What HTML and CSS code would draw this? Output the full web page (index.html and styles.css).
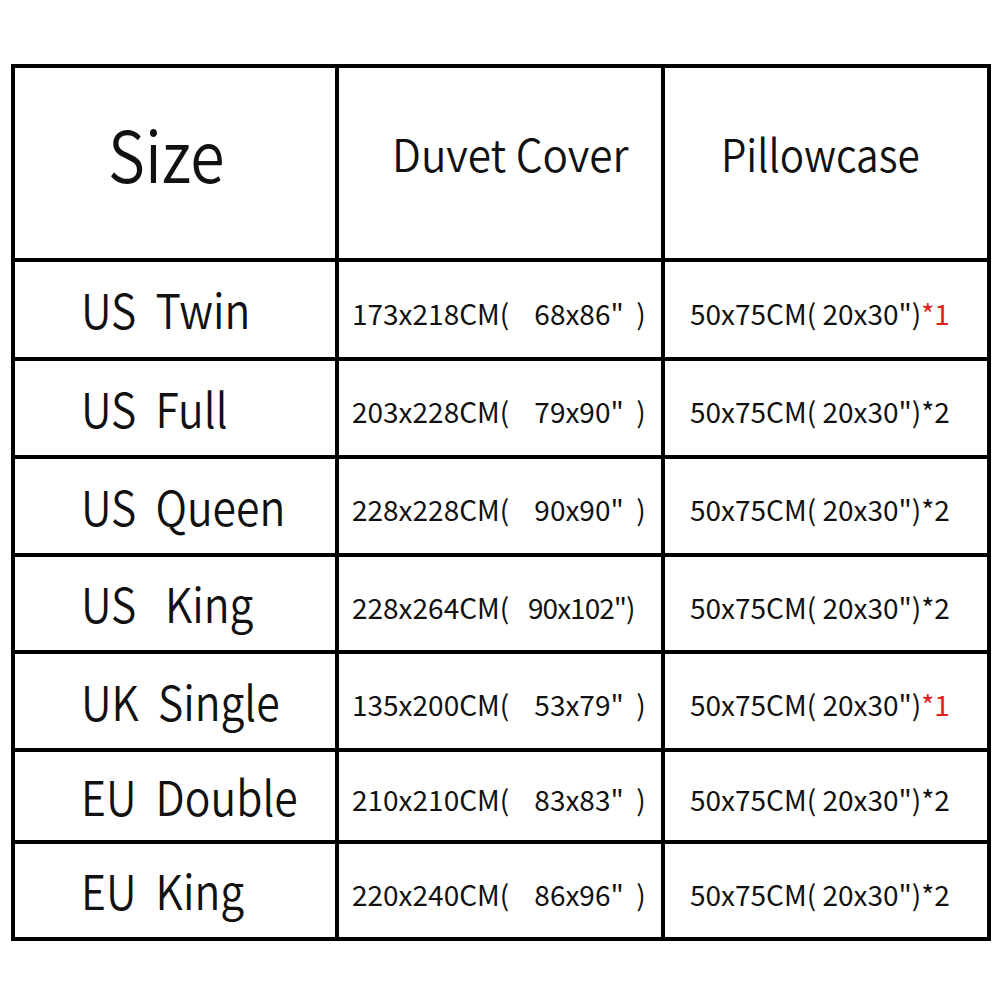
FILE: index.html
```html
<!DOCTYPE html>
<html>
<head>
<meta charset="utf-8">
<link rel="stylesheet" href="styles.css">
</head>
<body>
<div class="table">
  <div class="cell head c1"><span class="size">Size</span></div>
  <div class="cell head c2"><span class="hd duvet">Duvet Cover</span></div>
  <div class="cell head c3"><span class="hd pillow">Pillowcase</span></div>

  <div class="cell label"><span class="lt">US  Twin</span></div>
  <div class="cell d2">173x218CM(    68x86"  )</div>
  <div class="cell d3">50x75CM( 20x30")<span class="red">*1</span></div>

  <div class="cell label"><span class="lt">US  Full</span></div>
  <div class="cell d2">203x228CM(    79x90"  )</div>
  <div class="cell d3">50x75CM( 20x30")*2</div>

  <div class="cell label"><span class="lt">US  Queen</span></div>
  <div class="cell d2">228x228CM(    90x90"  )</div>
  <div class="cell d3">50x75CM( 20x30")*2</div>

  <div class="cell label"><span class="lt">US   King</span></div>
  <div class="cell d2">228x264CM(   <span class="tight">90x102")</span></div>
  <div class="cell d3">50x75CM( 20x30")*2</div>

  <div class="cell label"><span class="lt">UK  Single</span></div>
  <div class="cell d2">135x200CM(    53x79"  )</div>
  <div class="cell d3">50x75CM( 20x30")<span class="red">*1</span></div>

  <div class="cell label"><span class="lt">EU  Double</span></div>
  <div class="cell d2">210x210CM(    83x83"  )</div>
  <div class="cell d3">50x75CM( 20x30")*2</div>

  <div class="cell label"><span class="lt">EU  King</span></div>
  <div class="cell d2">220x240CM(    86x96"  )</div>
  <div class="cell d3">50x75CM( 20x30")*2</div>
</div>
</body>
</html>
```
FILE: styles.css
```css
html, body {
  margin: 0;
  padding: 0;
  background: #ffffff;
}
body {
  font-family: "Noto Sans CJK SC", "Noto Sans", sans-serif;
  font-weight: 350;
  color: #111111;
}
.table {
  margin: 64px 0 0 11px;
  width: 980px;
  box-sizing: border-box;
  display: grid;
  grid-template-columns: 320px 322px 322px;
  grid-template-rows: 190px 95px 94px 94px 93px 94px 88px 93px;
  gap: 4px;
  padding: 4px;
  background: #000000;
}
.cell {
  background: #ffffff;
  display: flex;
  align-items: center;
  white-space: pre;
  line-height: 1;
  box-sizing: border-box;
}
.head {
  padding-bottom: 22px;
}
.c1 { padding-left: 93px; }
.c2 { padding-left: 53px; }
.c3 { padding-left: 56px; }
.size, .hd, .lt {
  display: inline-block;
  transform-origin: left center;
}
.size {
  font-size: 71px;
  transform: scaleX(0.88);
}
.hd {
  font-size: 45px;
  transform: scaleX(0.9);
}
.duvet {
  transform: scaleX(0.94);
}
.label {
  font-size: 48px;
  padding-left: 66px;
  padding-bottom: 3px;
}
.lt {
  transform: scaleX(0.89);
}
.d2 {
  font-size: 28px;
  font-weight: 400;
  padding-left: 13px;
  padding-top: 6px;
}
.d3 {
  font-size: 28px;
  font-weight: 400;
  padding-left: 25px;
  padding-top: 6px;
}
.tight {
  letter-spacing: -1px;
}
.red {
  color: #e0201c;
}
```
